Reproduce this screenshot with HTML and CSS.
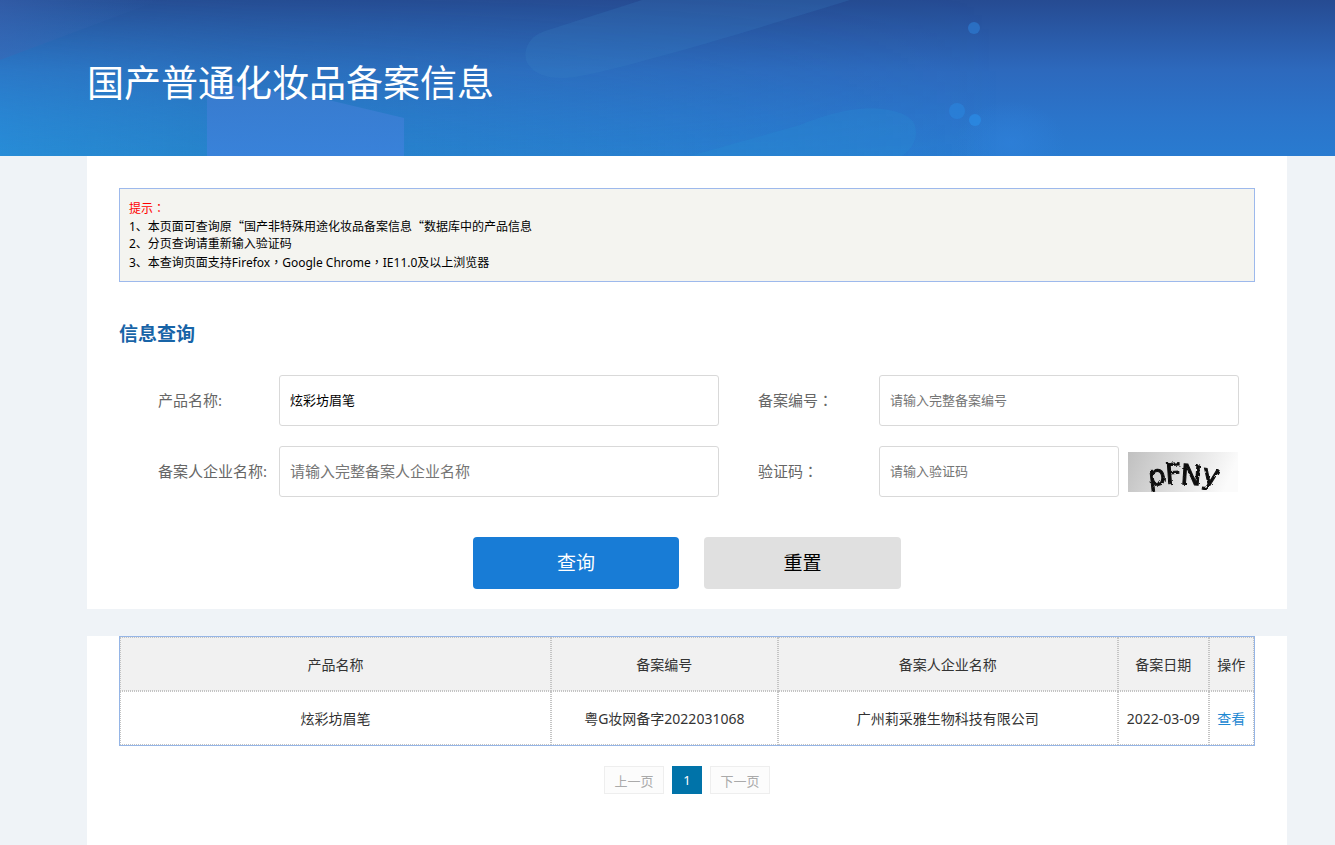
FILE: index.html
```html
<!DOCTYPE html>
<html lang="zh-CN">
<head>
<meta charset="utf-8">
<title>国产普通化妆品备案信息</title>
<link rel="stylesheet" href="styles.css">
</head>
<body>
<header class="banner">
  <svg class="banner-art" viewBox="0 0 1335 156" preserveAspectRatio="none" aria-hidden="true">
    <defs>
      <linearGradient id="base" x1="0" y1="0" x2="0" y2="1">
        <stop offset="0" stop-color="#264b92"/>
        <stop offset="0.45" stop-color="#2d69bd"/>
        <stop offset="0.75" stop-color="#2b74ca"/>
        <stop offset="1" stop-color="#297bd0"/>
      </linearGradient>
      <linearGradient id="left" x1="0" y1="0" x2="1" y2="0">
        <stop offset="0" stop-color="#2794da" stop-opacity="0.7"/>
        <stop offset="0.25" stop-color="#2390c4" stop-opacity="0.4"/>
        <stop offset="1" stop-color="#2390d0" stop-opacity="0"/>
      </linearGradient>
      <linearGradient id="fade" x1="0" y1="0" x2="0" y2="1">
        <stop offset="0" stop-color="#fff" stop-opacity="0.08"/>
        <stop offset="1" stop-color="#fff" stop-opacity="1"/>
      </linearGradient>
      <mask id="rise">
        <rect width="1335" height="156" fill="url(#fade)"/>
      </mask>
      <linearGradient id="corner" x1="0" y1="0" x2="1" y2="0">
        <stop offset="0" stop-color="#3c66b4" stop-opacity="0.5"/>
        <stop offset="1" stop-color="#3468b0" stop-opacity="0"/>
      </linearGradient>
      <linearGradient id="block" x1="0" y1="0" x2="0" y2="1">
        <stop offset="0" stop-color="#3b7bce"/>
        <stop offset="1" stop-color="#3c82dc"/>
      </linearGradient>
      <radialGradient id="glow">
        <stop offset="0" stop-color="#2f82dc" stop-opacity="0.6"/>
        <stop offset="1" stop-color="#2f82dc" stop-opacity="0"/>
      </radialGradient>
    </defs>
    <rect width="1335" height="156" fill="url(#base)"/>
    <rect width="1000" height="156" fill="url(#left)" mask="url(#rise)"/>
    <path d="M0 0H160L0 60Z" fill="url(#corner)"/>
    <path d="M850 0H642L545 31C526 37 522 55 528 64C536 77 556 81 580 76C620 69 730 37 850 0Z" fill="#3a85c8" opacity="0.2"/>
    <path d="M690 156L800 125C855 103 880 108 893 111C910 115 916 122 916 132Q916 146 902 156Z" fill="#2a98d8" opacity="0.2"/>
    <path d="M207 82L320 98L404 118V156H207Z" fill="url(#block)" opacity="0.85"/>
    <ellipse cx="1010" cy="143" rx="55" ry="42" fill="url(#glow)"/>
    <circle cx="974" cy="28" r="6" fill="#2c75ca" opacity="0.8"/>
    <circle cx="957" cy="111" r="8" fill="#2a86dd" opacity="0.6"/>
    <circle cx="975" cy="120" r="6" fill="#2a8ae2" opacity="0.8"/>
  </svg>
  <h1 class="banner-title">国产普通化妆品备案信息</h1>
</header>

<main class="page">
  <section class="panel search">
    <div class="tips">
      <p class="tips-title">提示<span class="mid" lang="zh-TW">：</span></p>
      <p>1、本页面可查询原<span class="cjk">“</span>国产非特殊用途化妆品备案信息<span class="cjk">“</span>数据库中的产品信息</p>
      <p>2、分页查询请重新输入验证码</p>
      <p>3、本查询页面支持Firefox<span class="mid" lang="zh-TW">，</span>Google Chrome<span class="mid" lang="zh-TW">，</span>IE11.0及以上浏览器</p>
    </div>
    <h2 class="section-title">信息查询</h2>
    <form>
      <div class="fields">
        <div class="field">
          <label for="product">产品名称:</label>
          <input id="product" type="text" value="炫彩坊眉笔">
        </div>
        <div class="field">
          <label for="number">备案编号<span class="mid" lang="zh-TW">：</span></label>
          <input id="number" type="text" placeholder="请输入完整备案编号">
        </div>
        <div class="field">
          <label for="company">备案人企业名称:</label>
          <input id="company" class="large" type="text" placeholder="请输入完整备案人企业名称">
        </div>
        <div class="field">
          <label for="captcha">验证码<span class="mid" lang="zh-TW">：</span></label>
          <input id="captcha" type="text" placeholder="请输入验证码">
          <svg class="captcha" viewBox="0 0 110 40" role="img" aria-label="验证码图片">
            <defs>
              <linearGradient id="paper" x1="0" y1="0" x2="1" y2="0.15">
                <stop offset="0" stop-color="#c0c0c0"/>
                <stop offset="1" stop-color="#fbfbfb"/>
              </linearGradient>
              <filter id="rough" x="-20%" y="-20%" width="140%" height="140%">
                <feTurbulence type="fractalNoise" baseFrequency="0.3" numOctaves="2" seed="4"/>
                <feDisplacementMap in="SourceGraphic" scale="3"/>
              </filter>
            </defs>
            <rect width="110" height="40" fill="url(#paper)"/>
            <g class="captcha-text" filter="url(#rough)">
              <text x="21" y="34" transform="rotate(-6 21 34)">p</text>
              <text x="38" y="32" transform="rotate(-4 38 32)">F</text>
              <text x="52" y="32" transform="rotate(4 52 32)">N</text>
              <text x="73" y="31" transform="rotate(10 73 31)">y</text>
            </g>
          </svg>
        </div>
      </div>
      <div class="actions">
        <button class="btn primary" type="button">查询</button>
        <button class="btn secondary" type="reset">重置</button>
      </div>
    </form>
  </section>

  <section class="panel results">
    <table>
      <thead>
        <tr>
          <th class="c-name">产品名称</th>
          <th class="c-number">备案编号</th>
          <th class="c-company">备案人企业名称</th>
          <th class="c-date">备案日期</th>
          <th class="c-action">操作</th>
        </tr>
      </thead>
      <tbody>
        <tr>
          <td>炫彩坊眉笔</td>
          <td>粤G妆网备字2022031068</td>
          <td>广州莉采雅生物科技有限公司</td>
          <td>2022-03-09</td>
          <td><a href="#">查看</a></td>
        </tr>
      </tbody>
    </table>
    <nav class="pager" aria-label="分页">
      <button type="button" disabled>上一页</button>
      <button type="button" class="current" aria-current="page">1</button>
      <button type="button" disabled>下一页</button>
    </nav>
  </section>
</main>
</body>
</html>
```
FILE: styles.css
```css
* {
  box-sizing: border-box;
}

body {
  margin: 0;
  min-height: 100vh;
  display: flex;
  flex-direction: column;
  background: #eff3f7;
  color: #333;
  font-family: "Noto Sans", "Noto Sans CJK SC", sans-serif;
  font-size: 14px;
}

h1, h2, p {
  margin: 0;
}

input, button {
  font-family: inherit;
}

.cjk {
  font-family: "Noto Sans CJK SC", sans-serif;
}

/* Punctuation centred in its full-width cell */
.mid {
  font-family: "Noto Sans CJK TC", sans-serif;
}

.banner {
  position: relative;
  height: 156px;
  padding: 0 48px 0 87px;
  display: flex;
  align-items: center;
}

.banner-art {
  position: absolute;
  inset: 0;
  width: 100%;
  height: 100%;
}

.banner-title {
  position: relative;
  padding-top: 10px;
  color: #fff;
  font-size: 37px;
  font-weight: 400;
  line-height: 48px;
}

.page {
  flex: 1;
  display: flex;
  flex-direction: column;
  gap: 27px;
  padding: 0 48px 0 87px;
}

.panel {
  background: #fff;
  padding: 0 32px;
}

.search {
  padding-top: 32px;
  padding-bottom: 20px;
}

.tips {
  padding: 10px 9px;
  border: 1px solid #9db9ec;
  background: #f4f4f0;
  color: #000;
  font-size: 12px;
  line-height: 18px;
}

.tips p {
  height: 18px;
}

.tips-title {
  color: #f00;
}

.section-title {
  margin: 38px 0 26px;
  color: #1864a7;
  font-size: 19px;
  line-height: 29px;
}

.fields {
  display: grid;
  grid-template-columns: minmax(0, 561fr) minmax(0, 481fr);
  gap: 20px 39px;
  padding: 0 16px 0 39px;
}

.field {
  display: flex;
  align-items: center;
}

.field label {
  flex: 0 0 121px;
  padding-bottom: 2px;
  color: #666;
  font-size: 15px;
  line-height: 22px;
}

.field input {
  flex: 1;
  min-width: 0;
  height: 51px;
  padding: 0 10px 2px;
  border: 1px solid #d9d9d9;
  border-radius: 3px;
  background: #fff;
  color: #000;
  font-size: 13px;
}

.field input::placeholder {
  color: #757575;
}

.field input.large {
  font-size: 15px;
}

.captcha {
  flex: none;
  width: 110px;
  height: 40px;
  margin: 0 1px 0 9px;
}

.captcha-text {
  fill: #111;
  stroke: #111;
  font-family: "DejaVu Sans", sans-serif;
  font-size: 28px;
}

.actions {
  display: flex;
  justify-content: center;
  gap: 25px;
  margin-top: 40px;
}

.btn {
  height: 52px;
  padding: 0 0 2px;
  border: 0;
  border-radius: 4px;
  font-size: 19px;
}

.primary {
  width: 206px;
  background: #187cd6;
  color: #fff;
}

.secondary {
  width: 197px;
  background: #e0e0e0;
  color: #000;
}

.results {
  flex: 1;
  padding-bottom: 40px;
}

table {
  width: 100%;
  table-layout: fixed;
  border: 1px solid #95b5e6;
  border-spacing: 0;
}

th, td {
  height: 54px;
  padding: 0;
  border: 1px dotted #c4c4c4;
  font-weight: 400;
  text-align: center;
}

th {
  background: #f1f1f1;
}

.c-name {
  width: 38%;
}

.c-number {
  width: 20%;
}

.c-company {
  width: 30%;
}

.c-date {
  width: 8%;
}

.c-action {
  width: 4%;
}

a {
  color: #1e88d2;
  text-decoration: none;
}

.pager {
  display: flex;
  justify-content: center;
  gap: 8px;
  margin-top: 20px;
}

.pager button {
  width: 60px;
  height: 28px;
  padding: 0;
  border: 1px solid #eee;
  background: #fcfcfc;
  color: #aaa;
  font-size: 13px;
}

.pager .current {
  width: 30px;
  border-color: #0073a9;
  background: #0073a9;
  color: #fff;
}
```
